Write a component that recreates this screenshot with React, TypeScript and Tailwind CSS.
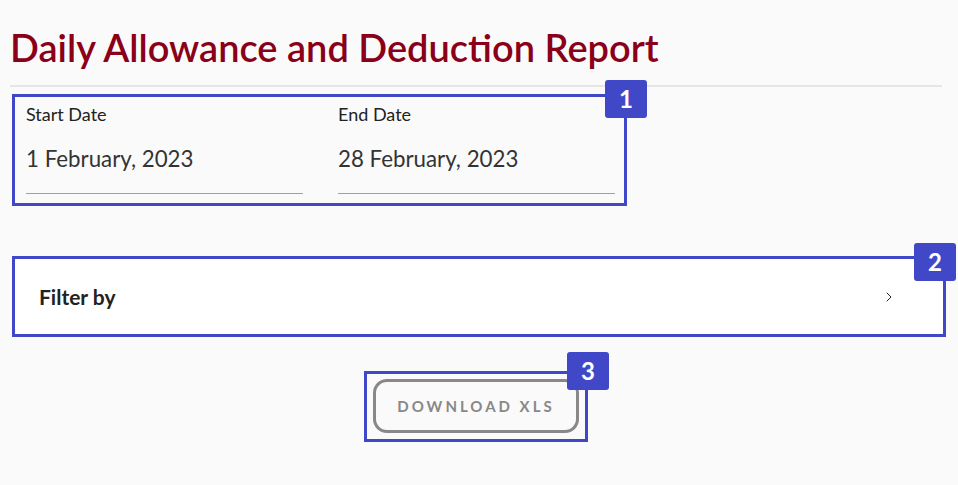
import { ChevronRight } from 'lucide-react';

function Badge({ n, className }: { n: number; className: string }) {
  return (
    <div
      className={`absolute flex h-[38px] w-[42px] items-center justify-center rounded-[3px] bg-[#4048c8] text-[24px] font-bold text-white ${className}`}
    >
      {n}
    </div>
  );
}

function DateField({ label, value }: { label: string; value: string }) {
  return (
    <div className="flex flex-col">
      <span className="text-[18px] leading-[22px] text-[#222]">{label}</span>
      <span className="mt-[20px] text-[22.3px] leading-[28px] text-[#333]">{value}</span>
      <div className="mt-[20px] h-px bg-[#a0a0a0]" />
    </div>
  );
}

export default function App() {
  return (
    <div className="min-h-[485px] w-[958px] bg-[#fafafa] pl-[10px] pt-[24px] font-['Lato',sans-serif]">
      <h1 className="text-[38px] font-semibold leading-[46px] text-[#8a0018]">
        Daily Allowance and Deduction Report
      </h1>
      <div className="mt-[15px] h-[2px] w-[932px] bg-[#e6e6e6]" />

      {/* date range */}
      <div className="relative ml-[2px] mt-[7px] w-[615px] pb-[12px] pl-[14px] pr-[12px] pt-[9px]">
        <div className="grid grid-cols-[277px_277px] gap-[35px]">
          <DateField label="Start Date" value="1 February, 2023" />
          <DateField label="End Date" value="28 February, 2023" />
        </div>
        <div className="pointer-events-none absolute inset-0 border-[3px] border-[#4048c8]" />
        <Badge n={1} className="-top-[14px] left-[593px]" />
      </div>

      {/* filters */}
      <div className="relative ml-[2px] mt-[50px] w-[934px]">
        <div className="flex h-[81px] items-center justify-between border border-[#e2e2e2] bg-white pl-[26px] pr-[48px]">
          <span className="text-[21px] font-bold text-[#222]">Filter by</span>
          <ChevronRight className="h-[16px] w-[16px] text-[#222]" strokeWidth={1.5} />
        </div>
        <div className="pointer-events-none absolute inset-0 border-[3px] border-[#4048c8]" />
        <Badge n={2} className="-top-[13px] left-[902px]" />
      </div>

      <div className="mt-[34px] flex justify-center pr-[10px]">
        <div className="relative ml-[-6px] px-[9px] pb-[9px] pt-[8px]">
          <button className="flex h-[54px] w-[206px] items-center justify-center rounded-[14px] border-[3px] border-[#888] text-[15px] font-bold tracking-[3px] text-[#888]">
            DOWNLOAD XLS
          </button>
          <div className="pointer-events-none absolute inset-0 border-[3px] border-[#4048c8]" />
          <Badge n={3} className="-top-[19px] left-[203px]" />
        </div>
      </div>
    </div>
  );
}
